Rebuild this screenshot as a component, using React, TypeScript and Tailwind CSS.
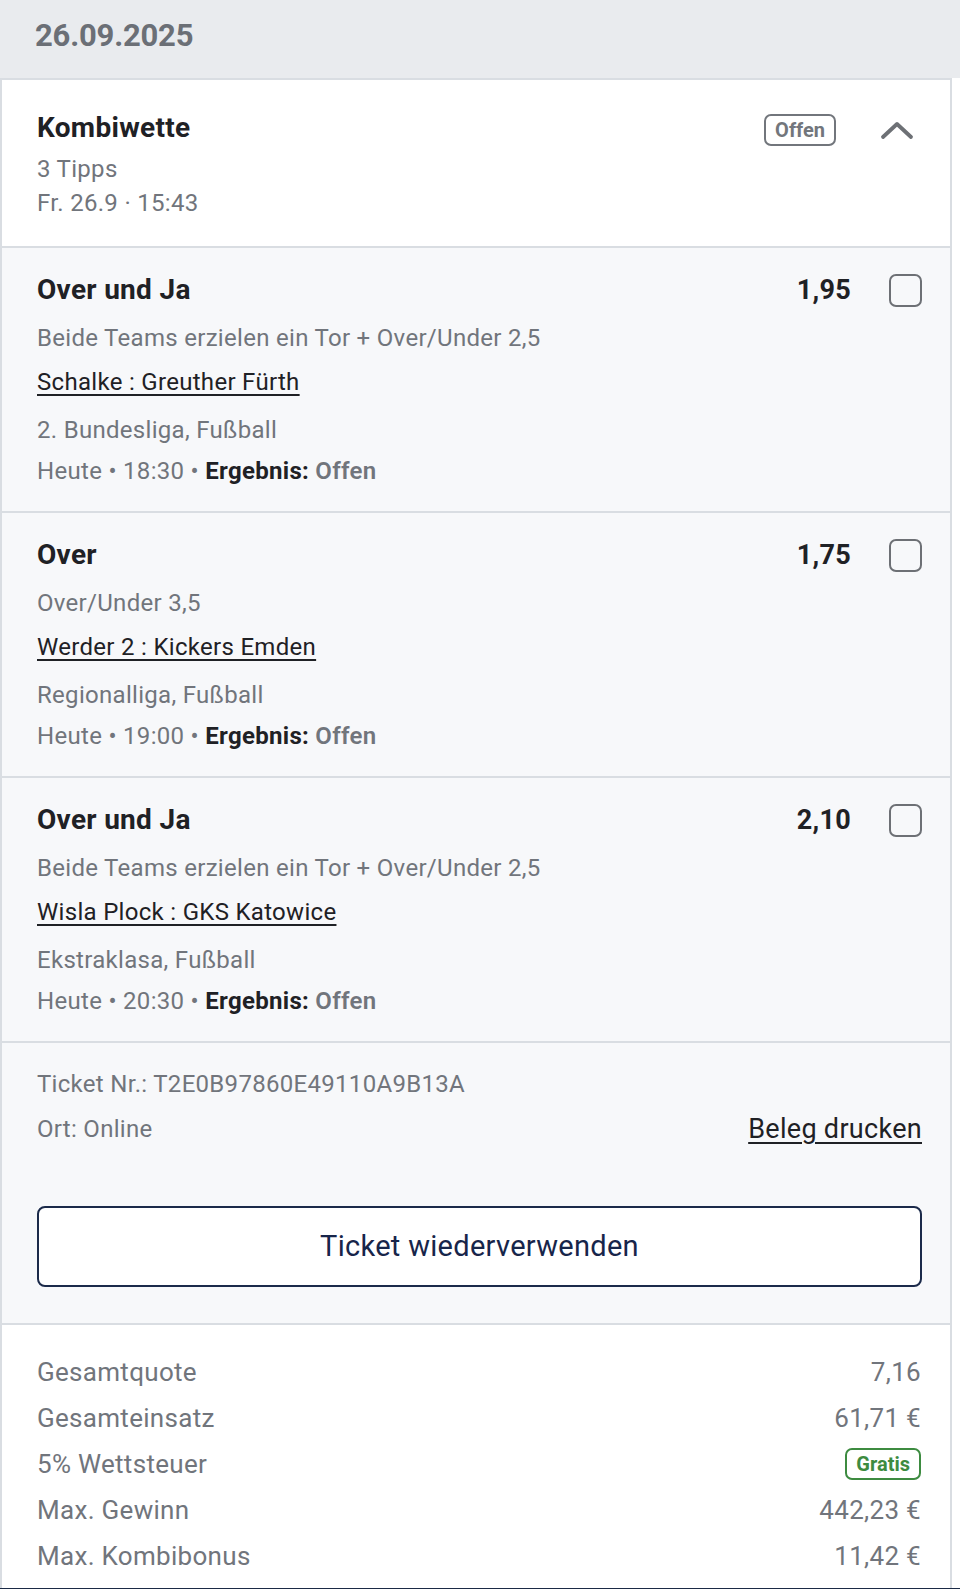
import React from 'react';

type Tip = {
    title: string;
    odds: string;
    market: string;
    match: string;
    league: string;
    time: string;
};

const tips: Tip[] = [
    {
        title: 'Over und Ja',
        odds: '1,95',
        market: 'Beide Teams erzielen ein Tor + Over/Under 2,5',
        match: 'Schalke : Greuther Fürth',
        league: '2. Bundesliga, Fußball',
        time: '18:30',
    },
    {
        title: 'Over',
        odds: '1,75',
        market: 'Over/Under 3,5',
        match: 'Werder 2 : Kickers Emden',
        league: 'Regionalliga, Fußball',
        time: '19:00',
    },
    {
        title: 'Over und Ja',
        odds: '2,10',
        market: 'Beide Teams erzielen ein Tor + Over/Under 2,5',
        match: 'Wisla Plock : GKS Katowice',
        league: 'Ekstraklasa, Fußball',
        time: '20:30',
    },
];

const summary = [
    { label: 'Gesamtquote', value: '7,16' },
    { label: 'Gesamteinsatz', value: '61,71 €' },
    { label: '5% Wettsteuer', value: null },
    { label: 'Max. Gewinn', value: '442,23 €' },
    { label: 'Max. Kombibonus', value: '11,42 €' },
];

function TipRow({ tip }: { tip: Tip }) {
    return (
        <div className="bg-[#f7f8fa] border-b-2 border-[#d9dde2] pt-[24px] pb-[24px] pl-[35px] pr-[28px]">
            <div className="flex items-center h-[36px]">
                <h3 className="flex-1 text-[28px] font-bold text-[#1f2125] tracking-[0.3px]">{tip.title}</h3>
                <span className="text-[27px] font-bold text-[#1f2125] tracking-[0.3px]">{tip.odds}</span>
                <span className="ml-[38px] w-[33px] h-[33px] rounded-[7px] border-2 border-[#6d7075]" />
            </div>
            <div className="mt-[14px] h-[32px] leading-[32px] text-[24px] text-[#71757c] tracking-[0.3px]">{tip.market}</div>
            <div className="mt-[12px] h-[32px] leading-[32px] text-[24px] text-[#1f2125] tracking-[0.3px]">
                <span className="underline underline-offset-[4px] decoration-[1.5px]">{tip.match}</span>
            </div>
            <div className="mt-[16px] h-[32px] leading-[32px] text-[24px] text-[#71757c] tracking-[0.3px]">{tip.league}</div>
            <div className="mt-[9px] h-[32px] leading-[32px] text-[24px] text-[#71757c] tracking-[0.3px]">
                Heute • {tip.time} • <span className="font-bold text-[#1f2125]">Ergebnis:</span>{' '}
                <span className="font-semibold text-[#71757c]">Offen</span>
            </div>
        </div>
    );
}

export default function App() {
    return (
        <div className="w-[960px] min-h-[1589px] bg-white font-['Roboto',sans-serif]">
            <div className="h-[78px] bg-[#e9ebee] flex items-center pl-[35px] pb-[6px]">
                <h2 className="text-[31px] font-bold text-[#6b6f76] tracking-[-0.2px]">26.09.2025</h2>
            </div>

            <div className="w-[952px] border-x-2 border-t-2 border-[#d9dde2]">
                {/* header */}
                <div className="bg-white border-b-2 border-[#d9dde2] pt-[30px] pb-[26px] pl-[35px] pr-[28px]">
                    <div className="flex items-center h-[36px]">
                        <h3 className="flex-1 text-[28px] font-bold text-[#1f2125] tracking-[0.3px]">Kombiwette</h3>
                        <div className="flex items-center mt-[4px]">
                            <span className="h-[32px] px-[9px] flex items-center rounded-[7px] border-2 border-[#72767c] text-[20px] font-bold text-[#72767c]">
                                Offen
                            </span>
                            <svg width="34" height="20" viewBox="0 0 34 20" className="ml-[44px] mr-[8px]">
                                <path d="M3 17 L17 4 L31 17" fill="none" stroke="#6d7075" strokeWidth="3.8" strokeLinecap="round" strokeLinejoin="round" />
                            </svg>
                        </div>
                    </div>
                    <div className="mt-[6px] h-[34px] leading-[34px] text-[24px] text-[#71757c] tracking-[0.3px]">3 Tipps</div>
                    <div className="h-[34px] leading-[34px] text-[24px] text-[#71757c] tracking-[0.3px]">Fr. 26.9 · 15:43</div>
                </div>

                {tips.map((tip, i) => (
                    <TipRow key={i} tip={tip} />
                ))}

                {/* ticket info */}
                <div className="bg-[#f7f8fa] border-b-2 border-[#d9dde2] pt-[25px] pb-[36px] pl-[35px] pr-[28px]">
                    <div className="h-[32px] leading-[32px] text-[24px] text-[#71757c] tracking-[0.3px]">Ticket Nr.: T2E0B97860E49110A9B13A</div>
                    <div className="mt-[13px] h-[32px] flex items-center justify-between">
                        <span className="text-[24px] text-[#71757c] tracking-[0.3px]">Ort: Online</span>
                        <span className="text-[27px] text-[#1f2125] underline underline-offset-[4px] decoration-[1.5px] tracking-[0.3px]">
                            Beleg drucken
                        </span>
                    </div>
                    <button className="mt-[61px] w-full h-[81px] rounded-[8px] border-2 border-[#1b2a4a] bg-white text-[29px] text-[#17254a] tracking-[0.3px]">
                        Ticket wiederverwenden
                    </button>
                </div>

                {/* summary */}
                <div className="bg-white pt-[24px] pb-[9px] pl-[35px] pr-[29px]">
                    {summary.map((row) => (
                        <div key={row.label} className="h-[46px] flex items-center justify-between">
                            <span className="text-[26px] text-[#71757c] tracking-[0.3px]">{row.label}</span>
                            {row.value ? (
                                <span className="text-[26px] text-[#71757c] tracking-[0.3px]">{row.value}</span>
                            ) : (
                                <span className="h-[32px] px-[9px] flex items-center rounded-[7px] border-2 border-[#3d8b40] text-[20px] font-bold text-[#3d8b40]">
                                    Gratis
                                </span>
                            )}
                        </div>
                    ))}
                </div>
            </div>
            <div className="h-[3px] bg-[#1b2a45]" />
        </div>
    );
}
